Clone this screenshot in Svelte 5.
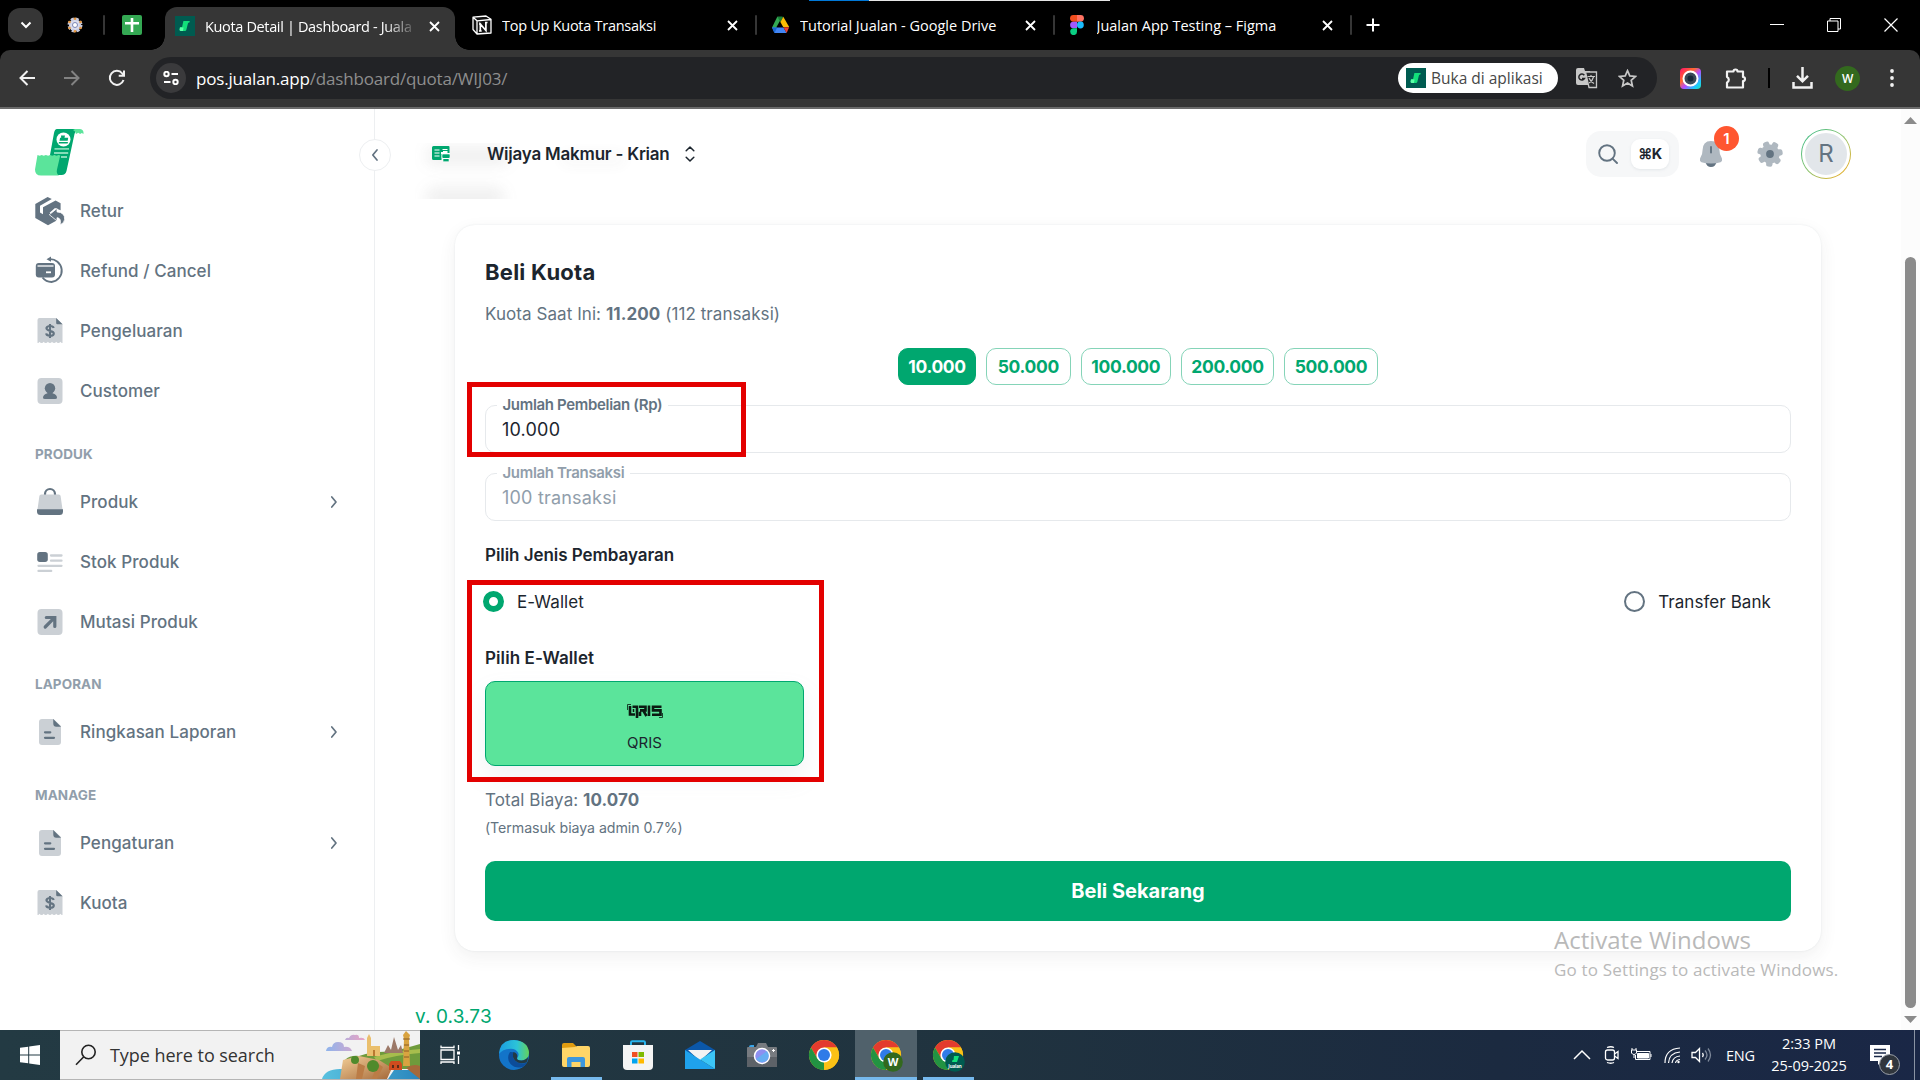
<script>
  let menu = [
    {
      items: [
        { label: "Retur", icon: "retur" },
        { label: "Refund / Cancel", icon: "refund" },
        { label: "Pengeluaran", icon: "bill" },
        { label: "Customer", icon: "user" }
      ]
    },
    {
      title: "Produk",
      items: [
        { label: "Produk", icon: "bag", children: true },
        { label: "Stok Produk", icon: "list" },
        { label: "Mutasi Produk", icon: "arrow" }
      ]
    },
    {
      title: "Laporan",
      items: [{ label: "Ringkasan Laporan", icon: "file", children: true }]
    },
    {
      title: "Manage",
      items: [
        { label: "Pengaturan", icon: "file", children: true },
        { label: "Kuota", icon: "bill" }
      ]
    }
  ];

  let tabs = [
    { title: "Top Up Kuota Transaksi", icon: "notion" },
    { title: "Tutorial Jualan - Google Drive", icon: "drive" },
    { title: "Jualan App Testing – Figma", icon: "figma" }
  ];

  let amounts = ["10.000", "50.000", "100.000", "200.000", "500.000"];
  let amount = "10.000";
  let payment = "ewallet";
</script>

<style>
  :global(body) {
    background: #fff;
    overflow: hidden;
  }
  .screen {
    position: relative;
    display: flex;
    flex-direction: column;
    width: 1920px;
    height: 1080px;
    overflow: hidden;
    font-family: Inter, "Liberation Sans", sans-serif;
    font-size: 17px;
    letter-spacing: 0.07px;
    color: #1c252e;
  }
  .screen * {
    box-sizing: border-box;
  }
  svg {
    display: block;
    flex: none;
  }
  button {
    font: inherit;
    letter-spacing: inherit;
    border: none;
    padding: 0;
    cursor: pointer;
  }

  /* browser */
  .browser {
    flex: none;
    height: 109px;
    background: #000;
    color: #fff;
    font-family: "Open Sans", "Noto Sans", sans-serif;
    letter-spacing: -0.35px;
  }
  .tabstrip {
    position: relative;
    display: flex;
    align-items: center;
    height: 50px;
  }
  .progress {
    position: absolute;
    top: 0;
    left: 809px;
    width: 301px;
    height: 1px;
    background: linear-gradient(90deg, #0078d7 60px, #e6e6e6 60px);
  }
  .tab-search {
    display: grid;
    place-items: center;
    width: 35px;
    height: 34px;
    margin-left: 8px;
    border-radius: 12px;
    background: #363636;
  }
  .pinned {
    margin-left: 24px;
  }
  .sep {
    flex: none;
    width: 2px;
    height: 20px;
    border-radius: 1px;
    background: #363636;
  }
  .pinned + .sep {
    margin: 0 17px 0 20px;
  }
  .active-tab {
    position: relative;
    display: flex;
    align-items: center;
    width: 290px;
    height: 43px;
    margin: 7px 0 0 23px;
    padding: 0 11px 5px 10px;
    border-radius: 12px 12px 0 0;
    background: #363636;
  }
  .active-tab::before,
  .active-tab::after {
    content: "";
    position: absolute;
    bottom: 0;
    width: 14px;
    height: 14px;
  }
  .active-tab::before {
    left: -14px;
    background: radial-gradient(circle at 0 0, transparent 13.5px, #363636 14px);
  }
  .active-tab::after {
    right: -14px;
    background: radial-gradient(circle at 100% 0, transparent 13.5px, #363636 14px);
  }
  .tab-title {
    flex: 1;
    overflow: hidden;
    white-space: nowrap;
    font-size: 14.5px;
  }
  .active-tab .tab-title {
    flex: none;
    width: 211px;
    margin: 0 13px 0 10px;
    -webkit-mask-image: linear-gradient(90deg, #000 180px, transparent 214px);
    mask-image: linear-gradient(90deg, #000 180px, transparent 214px);
  }
  .tab {
    display: flex;
    align-items: center;
    width: 297.5px;
    height: 50px;
    padding-left: 14px;
    letter-spacing: 0;
  }
  .active-tab + .tab {
    width: 302px;
    padding-left: 17px;
    letter-spacing: -0.27px;
  }
  .tab .tab-title {
    margin-left: 10px;
  }
  .tab:nth-last-child(3) .tab-title {
    margin-left: 12px;
  }
  .tab > .sep {
    margin-left: 17px;
  }
  .new-tab {
    margin-left: 14px;
  }
  .window-buttons {
    display: flex;
    align-items: center;
    gap: 43px;
    margin-left: auto;
    margin-right: 22px;
  }
  .toolbar {
    display: flex;
    align-items: center;
    height: 59px;
    padding: 0 13px 1px 18px;
    border-bottom: 2px solid #6b6b6b;
    border-radius: 10px 10px 0 0;
    background: #363636;
  }
  .nav {
    display: flex;
    gap: 27px;
    width: 132px;
  }
  .omnibox {
    display: flex;
    align-items: center;
    width: 1507px;
    height: 42px;
    padding: 0 20px 0 6px;
    border-radius: 21px;
    background: #222326;
  }
  .site-info {
    display: grid;
    place-items: center;
    width: 30px;
    height: 30px;
    border-radius: 50%;
    background: #3a3a3c;
  }
  .url {
    flex: 1;
    margin-left: 10px;
    padding-top: 1px;
    font-size: 17px;
    letter-spacing: -0.18px;
    color: #8e8e8e;
  }
  .url b {
    font-weight: 400;
    color: #fff;
  }
  .open-app {
    display: flex;
    align-items: center;
    gap: 5px;
    width: 160px;
    height: 30px;
    margin-right: 18px;
    padding-left: 8px;
    border-radius: 15px;
    background: #fff;
    color: #474747;
    font-size: 15.5px;
    font-weight: 500;
    letter-spacing: 0;
    white-space: nowrap;
  }
  .omnibox .star {
    margin-left: 20px;
  }
  .extensions {
    display: flex;
    flex: 1;
    align-items: center;
    padding-left: 23px;
  }
  .extensions .bar {
    width: 2px;
    height: 20px;
    margin: 0 22px 0 21px;
    background: #000;
  }
  .extensions .profile {
    display: grid;
    place-items: center;
    width: 25px;
    height: 25px;
    margin-left: 22px;
    border-radius: 50%;
    background: #33691e;
    font-size: 12px;
    font-weight: 600;
  }
  .extensions .puzzle {
    margin-left: 24px;
  }
  .extensions .dots {
    margin-left: 30px;
  }

  /* page */
  .page {
    display: flex;
    flex: 1;
    min-height: 0;
    background: #fff;
  }
  .sidebar {
    position: relative;
    width: 375px;
    padding: 20px 0 0 35px;
    border-right: 1px solid #edeff1;
    color: #637381;
  }
  .logo {
    margin-bottom: 5px;
  }
  .collapse {
    position: absolute;
    top: 30px;
    right: -17px;
    display: grid;
    place-items: center;
    width: 32px;
    height: 32px;
    border: 1px solid #edeff1;
    border-radius: 50%;
    background: #fff;
  }
  .subheader {
    height: 50.5px;
    padding-top: 22.5px;
    color: #919eab;
    font-size: 13.5px;
    font-weight: 700;
    line-height: 20px;
    text-transform: uppercase;
  }
  .item {
    display: flex;
    align-items: center;
    height: 60px;
    padding-right: 31px;
    font-weight: 450;
  }
  .item span {
    flex: 1;
    margin-left: 15px;
  }
  .main {
    display: flex;
    flex: 1;
    flex-direction: column;
  }
  .header {
    position: relative;
    display: flex;
    align-items: center;
    height: 90px;
    padding: 0 50px 0 57px;
  }
  .ghost {
    position: absolute;
    top: 34px;
    left: 40px;
    width: 300px;
    height: 56px;
    overflow: hidden;
  }
  .ghost i {
    position: absolute;
    border-radius: 12px;
    background: rgba(90, 90, 90, 0.085);
    filter: blur(7px);
  }
  .ghost i:nth-child(1) {
    top: 3px;
    left: 10px;
    width: 85px;
    height: 20px;
  }
  .ghost i:nth-child(2) {
    top: 43px;
    left: 10px;
    width: 80px;
    height: 24px;
  }
  .ghost i:nth-child(3) {
    top: 9px;
    left: 145px;
    width: 66px;
    height: 14px;
    opacity: 0.45;
  }
  .store {
    position: relative;
    margin: 0 15px 0 37px;
    font-weight: 600;
    letter-spacing: -0.22px;
  }
  .store-icon,
  .store + svg {
    position: relative;
  }
  .tools {
    display: flex;
    align-items: center;
    margin-left: auto;
  }
  .search {
    display: flex;
    align-items: center;
    justify-content: space-between;
    width: 93px;
    height: 46px;
    padding: 0 10px 0 12px;
    border-radius: 15px;
    background: #f6f7f8;
  }
  kbd {
    width: 38px;
    height: 30px;
    border-radius: 9px;
    background: #fff;
    box-shadow: 0 1px 3px rgba(145, 158, 171, 0.18);
    font: 700 14.5px/30px Inter, "DejaVu Sans", sans-serif;
    letter-spacing: -0.5px;
    text-align: center;
  }
  .bell {
    position: relative;
    margin: 0 35px 0 21px;
  }
  .bell b {
    position: absolute;
    top: -15px;
    right: -17px;
    width: 25px;
    height: 25px;
    border-radius: 50%;
    background: #ff5630;
    color: #fff;
    font-size: 15px;
    font-weight: 600;
    line-height: 25px;
    text-align: center;
  }
  .avatar {
    display: grid;
    place-items: center;
    width: 50px;
    height: 50px;
    margin-left: 18px;
    border-radius: 50%;
    background: linear-gradient(135deg, #2bb987, #8fc36e 50%, #ffab1a);
  }
  .avatar span {
    width: 48px;
    height: 48px;
    border: 3px solid #fff;
    border-radius: 50%;
    background: #e2e6ea;
    color: #637381;
    font-size: 24px;
    font-weight: 400;
    line-height: 42px;
    text-align: center;
  }
  .card {
    width: 1366px;
    height: 726px;
    margin: 26px 0 0 80px;
    padding: 30px;
    border-radius: 20px;
    background: #fff;
    box-shadow: 0 0 2px rgba(145, 158, 171, 0.2), 0 6px 18px rgba(60, 60, 60, 0.07);
  }
  h1 {
    margin: 0;
    font-size: 22px;
    font-weight: 700;
    line-height: 34px;
    letter-spacing: 0.25px;
  }
  p {
    margin: 0;
    color: #637381;
    line-height: 26px;
  }
  .balance {
    margin-top: 12px;
  }
  .chips {
    display: flex;
    justify-content: center;
    gap: 10px;
    margin-top: 21px;
  }
  .chip {
    height: 37px;
    padding: 0 9.5px 1px;
    border: 1px solid #85d4b8;
    border-radius: 10px;
    background: #fff;
    color: #00a76f;
    font-size: 17.5px;
    font-weight: 700;
    letter-spacing: -0.35px;
  }
  .chip:nth-child(2) {
    padding: 0 11px 1px;
  }
  .chip.selected {
    padding: 0 9px 1px;
    border-color: #00a76f;
    background: #00a76f;
    color: #fff;
  }
  .field {
    position: relative;
    height: 48px;
    margin-top: 20px;
    padding: 0 16px;
    border: 1px solid #e6e9ec;
    border-radius: 10px;
    font-size: 18px;
    line-height: 47px;
    letter-spacing: 0.2px;
  }
  .field label {
    position: absolute;
    top: -12px;
    left: 11px;
    padding: 0 6px 0 5.5px;
    background: #fff;
    color: #637381;
    font-size: 15px;
    font-weight: 600;
    line-height: 22px;
    letter-spacing: -0.33px;
  }
  .field.disabled,
  .field.disabled label {
    color: #919eab;
  }
  h2 {
    margin: 21px 0 0;
    font-size: 17px;
    font-weight: 600;
    line-height: 26px;
    letter-spacing: -0.05px;
  }
  .methods {
    display: flex;
    justify-content: space-between;
    height: 47px;
    margin-top: 10px;
    padding-right: 20px;
  }
  .radio {
    display: flex;
    align-items: center;
    gap: 13px;
    margin-left: -2px;
  }
  .radio i {
    width: 21px;
    height: 21px;
    border: 2px solid #637381;
    border-radius: 50%;
  }
  .radio.checked i {
    border: 6px solid #00a76f;
  }
  .methods + h2 {
    margin-top: 20px;
    letter-spacing: 0.1px;
  }
  .wallet {
    display: flex;
    flex-direction: column;
    align-items: center;
    width: 319px;
    height: 85px;
    margin-top: 10px;
    padding-top: 22px;
    border: 1px solid #00a76f;
    border-radius: 10px;
    background: #5be49b;
    box-shadow: 0 12px 24px rgba(145, 158, 171, 0.12);
    color: #1c252e;
    font-size: 15px;
  }
  .wallet span {
    margin-top: 14px;
    line-height: 20px;
  }
  .total {
    margin-top: 21px;
  }
  .fee {
    margin-top: 4px;
    font-size: 14.2px;
    line-height: 22px;
    letter-spacing: -0.06px;
  }
  .buy {
    width: 100%;
    height: 60px;
    margin-top: 22px;
    border-radius: 10px;
    background: #00a76f;
    color: #fff;
    font-size: 20px;
    font-weight: 700;
    letter-spacing: 0;
  }
  .version {
    margin: 54px 0 0 40px;
    color: #00a76f;
    font-size: 19px;
    line-height: 24px;
    letter-spacing: 0.1px;
  }
  .scrollbar {
    display: flex;
    flex-direction: column;
    align-items: center;
    justify-content: space-between;
    width: 19px;
    padding: 8px 0 7px;
    background: #fcfcfc;
  }
  .thumb {
    width: 11px;
    height: 751px;
    margin-top: 125px;
    border-radius: 6px;
    background: #8b8b8b;
  }

  /* highlight boxes and watermark drawn over the page */
  .mark {
    position: absolute;
    left: 467px;
    border: 5px solid #e30000;
  }
  .mark.amount {
    top: 382px;
    width: 279px;
    height: 75px;
  }
  .mark.payment {
    top: 580px;
    width: 357px;
    height: 202px;
  }
  .watermark {
    position: absolute;
    top: 923px;
    left: 1554px;
    color: #b9b9b9;
    font-family: "Open Sans", sans-serif;
    font-size: 17px;
    line-height: 26px;
    letter-spacing: 0.17px;
    white-space: nowrap;
  }
  .watermark div {
    font-size: 24px;
    line-height: 34px;
    letter-spacing: 0;
  }

  /* taskbar */
  .taskbar {
    display: flex;
    flex: none;
    align-items: center;
    height: 50px;
    background: linear-gradient(90deg, #233a43, #20333f 50%, #1b2a40 78%, #1a2746);
    color: #fff;
    font-family: "Open Sans", "Noto Sans", sans-serif;
    letter-spacing: -0.15px;
  }
  .start {
    display: grid;
    place-items: center;
    width: 60px;
  }
  .find {
    display: flex;
    align-items: center;
    width: 360px;
    height: 50px;
    padding-left: 15px;
    border: 1px solid #b5b5b5;
    border-width: 1px 0;
    background: #f2f2f2;
    color: #333;
    font-size: 18px;
  }
  .find span {
    flex: 1;
    margin-left: 13px;
    letter-spacing: -0.05px;
  }
  .taskview {
    width: 63px;
    padding-left: 20px;
  }
  .app {
    display: grid;
    place-items: center;
    width: 62px;
    height: 50px;
  }
  .app.open {
    background: linear-gradient(#76b9ed, #76b9ed) center bottom / 51px 3px no-repeat;
  }
  .app.current {
    border-bottom: 3px solid #76b9ed;
    padding-top: 3px;
    background: #50616b;
  }
  .tray {
    display: flex;
    align-items: center;
    height: 50px;
    margin-left: auto;
    font-size: 14.5px;
  }
  .tray > svg {
    margin-right: 12px;
  }
  .tray > svg:nth-child(3) {
    margin-left: -2px;
  }
  .tray > svg:nth-child(4) {
    margin-right: 10px;
  }
  .tray > svg:nth-child(5) {
    margin-right: 14px;
  }
  .clock {
    width: 84px;
    margin: 0 19px 0 12px;
    line-height: 22px;
    letter-spacing: 0;
    text-align: center;
  }
  .notice {
    position: relative;
    width: 45px;
    border-right: 1px solid #8a93a3;
    height: 50px;
    padding-top: 14px;
    margin-right: 5px;
  }
  .notice b {
    position: absolute;
    top: 24px;
    left: 9px;
    width: 21px;
    height: 21px;
    border: 1px solid #9aa0a8;
    border-radius: 50%;
    background: #30363d;
    font-size: 13px;
    line-height: 19px;
    text-align: center;
  }
</style>

{#snippet cross()}
  <svg width="11" height="11" viewBox="0 0 11 11" stroke="#fff" stroke-width="1.8"><path d="M1 1l9 9M10 1l-9 9" /></svg>
{/snippet}

{#snippet appIcon(size)}
  <svg width={size} height={size} viewBox="0 0 20 20">
    <path fill="#005b50" d="M0 0h20v20H0z" />
    <path fill="#12e07a" d="M8.4 5h6.4l-.6 1.8h-1.1L11.3 14q-.3 1-1.4 1H6q-1.6 0-1.3-1.7l.5-2.3h1.9z" />
    <path fill="#5dffa8" d="M4.9 11.4h3.6L8 15H6q-1.5 0-1.4-1.5z" />
  </svg>
{/snippet}

{#snippet tabIcon(name)}
  {#if name === "notion"}
    <svg width="20" height="20" viewBox="0 0 20 20">
      <path fill="#111" stroke="#fff" stroke-width="1.3" stroke-linejoin="round" d="M1 2.2L14 1l5 3.3V18l-14 1-4-4.5zM1 2.2l4 3.6V19M5 5.8l14-1.3" />
      <path fill="none" stroke="#fff" stroke-width="1.7" d="M8.3 16V9l5.6 6.5v-8M7 9h2.2M13 7.5h2.5M7 16h2.7" />
    </svg>
  {:else if name === "drive"}
    <svg width="19" height="18" viewBox="0 0 19 18">
      <path fill="#34a853" d="M6.3.8h5L3.8 14 1 11.6z" />
      <path fill="#188038" d="M6.3.8h6L9.4 6z" />
      <path fill="#fbbc04" d="M12.3.8L18.2 11h-6L9.4 6z" />
      <path fill="#4285f4" d="M1 11.5h11.5L15.6 17H3.5z" />
      <path fill="#1967d2" d="M1 11.5h5.2L3.5 17z" />
      <path fill="#ea4335" d="M12.4 11.3h5.8L15.6 17z" />
    </svg>
  {:else}
    <svg width="16" height="20" viewBox="0 0 16 20">
      <path fill="#f24e1e" d="M8 0v6.7H4.4a3.35 3.35 0 010-6.7z" />
      <path fill="#ff7262" d="M8 0h3.6a3.35 3.35 0 010 6.7H8z" />
      <path fill="#a259ff" d="M8 6.7v6.6H4.4a3.3 3.3 0 010-6.6z" />
      <circle fill="#1abcfe" cx="11.4" cy="10" r="3.4" />
      <path fill="#0acf83" d="M4.4 13.3H8v3.4a3.4 3.4 0 11-3.6-3.4z" />
    </svg>
  {/if}
{/snippet}

{#snippet menuIcon(name)}
  <svg width="30" height="30" viewBox="0 0 30 30" fill="#637381">
    {#if name === "retur"}
      <path d="M.3 8L12.6 1l4.2 2L5 9.7v6.8l3 1.7v-7L20.6 4.5l5 2.7v7L20 12l-5.4 4.8 7.1 5.6v2.1L13 29.3.3 22z" />
      <path d="M22 12.5v3.4q8.200.5 7.600 7.700-.4 3.600-4.600 5.300 1.700-6.900-3-7.200v3.200l-7.700-6.200z" stroke="#fff" stroke-width=".8" />
    {:else if name === "refund"}
      <path fill="none" stroke="#637381" stroke-width="1.9" d="M14 3.2a11.4 11.4 0 112.5 22.8q-5.5 0-9-4.5" />
      <path d="M11.5 3.2L16 .5v5.3z" />
      <rect x=".8" y="7" width="19.2" height="14.5" rx="3" />
      <path stroke="#fff" stroke-width="1.3" d="M2.5 10h16" />
      <path stroke="#fff" stroke-width="1.8" d="M11 16.3h5" />
    {:else if name === "bill"}
      <path fill="#cbd0d5" d="M4.5 2H21l6.500 6v19q-1.500 0-2.100-1.200-.8 1.200-2.100 1.200t-2.100-1.200q-.8 1.200-2.100 1.200T17 25.800q-.8 1.200-2 1.200t-2.100-1.200q-.8 1.200-2.100 1.200t-2.100-1.200Q8 27 6.600 27t-2-1.200Q4 27 2.500 27V4q0-2 2-2z" />
      <path d="M21.2 2l6.300 6.300h-5q-1.300 0-1.300-1.300z" />
      <path fill="none" stroke="#637381" stroke-width="2.1" d="M18.7 12q-.6-2-3.600-2t-3.700 2.100c0 3.800 7.400 1.900 7.400 5.300q0 2.300-3.700 2.300t-3.900-2.300M15 8v14" />
    {:else if name === "user"}
      <rect fill="#cbd0d5" x="2.5" y="2" width="25" height="26" rx="4" />
      <circle cx="15" cy="12.3" r="5.2" />
      <path d="M12.5 15h5v2.300q4.500 1.200 4.500 4.400 0 1.300-2 1.300H10q-2 0-2-1.300 0-3.200 4.500-4.400z" />
    {:else if name === "bag"}
      <path fill="none" stroke="#637381" stroke-width="2.2" d="M10 8.5V7a5 5 0 0110 0v1.5" />
      <path fill="#cbd0d5" d="M6.2 7.5h17.6q1.600 0 1.800 1.500l2 14H2.400l2-14q.2-1.500 1.800-1.500z" />
      <path d="M2 22.3h26v2.200q0 3.500-3.500 3.500h-19Q2 28 2 24.500z" />
    {:else if name === "list"}
      <rect x="2.2" y="5" width="10.6" height="10" rx="2.7" />
      <path fill="none" stroke="#cbd0d5" stroke-width="2.3" stroke-linecap="round" d="M16 8.5h10.500M16 13.700h10.500M3.500 18.800h23M3.500 23.900h12.700" />
    {:else if name === "arrow"}
      <rect fill="#cbd0d5" x="2.5" y="2" width="25" height="26" rx="4" />
      <path fill="none" stroke="#637381" stroke-width="3.2" stroke-linecap="round" d="M11.3 10.5h8.500v9M19.500 10.700L10.200 20" />
    {:else}
      <path fill="#cbd0d5" d="M7 2h11.500L26 9v16q0 3-3 3H7q-3 0-3-3V5q0-3 3-3z" />
      <path d="M18.2 2l7.800 7.800h-4.700q-3 0-3-3z" />
      <path fill="none" stroke="#637381" stroke-width="2.2" stroke-linecap="round" d="M10 15.3h5.300M10 20.800h9" />
    {/if}
  </svg>
{/snippet}

{#snippet chrome(badge)}
  <svg width="34" height="34" viewBox="0 0 34 34">
    <circle cx="17" cy="17" r="15" fill="#fbc116" />
    <path fill="#e33b2e" d="M4 9.5A15 15 0 0130 9.5H17l-6.500 11z" />
    <path fill="#229342" d="M4 9.5l6.500 11.300L17 24.500 17 32A15 15 0 014 9.500z" />
    <path fill="#fbc116" d="M17 9.5h13A15 15 0 0117 32l6.500-11.200z" />
    <circle cx="17" cy="17" r="7.6" fill="#fff" />
    <circle cx="17" cy="17" r="6" fill="#2f7be8" />
    {#if badge === "w"}
      <circle cx="24" cy="24" r="9.8" fill="#33691e" />
      <text x="24" y="28" fill="#fff" font-size="11" font-weight="700" text-anchor="middle">W</text>
    {:else if badge === "app"}
      <circle cx="24" cy="24" r="9.8" fill="#005b50" />
      <path fill="#12e07a" d="M23 18h5l-2 6h-5l.5-2h1z" />
      <text x="24" y="29.5" fill="#fff" font-size="4.5" font-weight="700" text-anchor="middle">Jualan</text>
    {/if}
  </svg>
{/snippet}

<div class="screen">
  <div class="browser">
    <div class="tabstrip">
      <div class="progress"></div>
      <div class="tab-search">
        <svg width="12" height="8" viewBox="0 0 12 8" fill="none" stroke="#fff" stroke-width="2"><path d="M1.5 1.5L6 6l4.5-4.5" /></svg>
      </div>
      <svg class="pinned" width="16" height="16" viewBox="0 0 16 16">
        <circle cx="8" cy="8" r="6" fill="#d9dcec" stroke="#c7cbe0" stroke-width="3" stroke-dasharray="3 1.7" />
        <g fill="#e5973f"><circle cx="8" cy="1.8" r="1.3" /><circle cx="8" cy="14.2" r="1.3" /><circle cx="2.5" cy="5" r="1.3" /><circle cx="13.5" cy="5" r="1.3" /><circle cx="2.5" cy="11" r="1.3" /><circle cx="13.5" cy="11" r="1.3" /></g>
        <circle cx="8" cy="8" r="2.5" fill="#fff" stroke="#7c86b5" />
      </svg>
      <div class="sep"></div>
      <svg width="20" height="20" viewBox="0 0 20 20"><rect width="20" height="20" rx="2" fill="#34a853" /><path stroke="#fff" stroke-width="2.6" d="M10 3v14M3 8.3h14" /></svg>
      <div class="active-tab">
        {@render appIcon(20)}
        <span class="tab-title">Kuota Detail | Dashboard - Juala</span>
        {@render cross()}
      </div>
      {#each tabs as tab}
        <div class="tab">
          {@render tabIcon(tab.icon)}
          <span class="tab-title">{tab.title}</span>
          {@render cross()}
          <div class="sep"></div>
        </div>
      {/each}
      <svg class="new-tab" width="14" height="14" viewBox="0 0 14 14" stroke="#fff" stroke-width="2"><path d="M7 .5v13M.5 7h13" /></svg>
      <div class="window-buttons">
        <svg width="14" height="14" viewBox="0 0 14 14" stroke="#fff"><path d="M0 6.5h14" /></svg>
        <svg width="14" height="14" viewBox="0 0 14 14" fill="none" stroke="#fff"><path d="M.5 3h10.500v10.500H.5zM3 3V.5h10.500v10.500H11" /></svg>
        <svg width="14" height="14" viewBox="0 0 14 14" stroke="#fff" stroke-width="1.2"><path d="M.5.5l13 13M13.500.5l-13 13" /></svg>
      </div>
    </div>
    <div class="toolbar">
      <div class="nav">
        <svg width="18" height="18" viewBox="0 0 18 18" fill="none" stroke="#f1f1f1" stroke-width="2"><path d="M17 9H3M9.500 2L2.500 9l7 7" /></svg>
        <svg width="18" height="18" viewBox="0 0 18 18" fill="none" stroke="#828282" stroke-width="2"><path d="M1 9h14M8.500 2l7 7-7 7" /></svg>
        <svg width="18" height="18" viewBox="0 0 18 18" fill="none" stroke="#f1f1f1" stroke-width="2"><path d="M15.500 11a7 7 0 11-1.200-6.500L16 6.300M16 1.500v5.300h-5.300" /></svg>
      </div>
      <div class="omnibox">
        <div class="site-info">
          <svg width="16" height="14" viewBox="0 0 16 14" fill="none" stroke="#fff" stroke-width="2"><circle cx="3.5" cy="3" r="2.2" /><path d="M8.500 3H15M1 11h6.500" /><circle cx="12.5" cy="11" r="2.2" /></svg>
        </div>
        <div class="url"><b>pos.jualan.app</b>/dashboard/quota/WIJ03/</div>
        <div class="open-app">{@render appIcon(20)} Buka di aplikasi</div>
        <svg width="22" height="22" viewBox="0 0 22 22">
          <path fill="#c7c7c7" d="M2 1h6l1 3h5l3 14H2q-2 0-2-2V3q0-2 2-2z" />
          <path fill="#2a2b2d" stroke="#c7c7c7" stroke-width="1.3" d="M9.500 5h11v15.500H13z" />
          <path fill="none" stroke="#222326" stroke-width="1.5" d="M8.300 8.300A3 3 0 108.500 11.500H6" />
          <path fill="none" stroke="#c7c7c7" stroke-width="1.2" d="M11.500 9.500h7.500M15 8v1.500M17.500 10q-1 4-4.500 6M13 11q1.500 3.500 5 5.500" />
        </svg>
        <svg class="star" width="19" height="19" viewBox="0 0 20 20" fill="none" stroke="#c7c7c7" stroke-width="1.8"><path d="M10 1.800l2.400 5.500 6 .6-4.500 4 1.300 5.900L10 14.700l-5.200 3.100 1.300-5.900-4.500-4 6-.6z" /></svg>
      </div>
      <div class="extensions">
        <svg width="21" height="21" viewBox="0 0 21 21">
          <defs><linearGradient id="cam" x1="0" y1="0" x2="1" y2="1"><stop offset="0" stop-color="#ff0f6f" /><stop offset=".35" stop-color="#ff6a2b" /><stop offset=".55" stop-color="#b84bff" /><stop offset=".8" stop-color="#1cc8ff" /><stop offset="1" stop-color="#23e5b5" /></linearGradient></defs>
          <rect width="21" height="21" rx="4" fill="url(#cam)" />
          <circle cx="10.5" cy="10.5" r="7" fill="#3b4a57" stroke="#fff" stroke-width="2" />
          <circle cx="10.5" cy="10.5" r="3" fill="#172838" />
        </svg>
        <svg class="puzzle" width="22" height="22" viewBox="0 0 22 22" fill="none" stroke="#f1f1f1" stroke-width="2.2"><path stroke-linejoin="round" d="M2 4.500h6.500a2 2 0 114 0H18v5.500a2 2 0 110 4v6.500H2v-5a3 3 0 000-5.500z" /></svg>
        <div class="bar"></div>
        <svg width="21" height="22" viewBox="0 0 21 22" fill="none" stroke="#f1f1f1" stroke-width="2.5"><path d="M10.500 0v14M5 8.800l5.500 5.500L16 8.800M1.500 15v5.500h18V15" /></svg>
        <div class="profile">W</div>
        <svg class="dots" width="4" height="20" viewBox="0 0 4 20" fill="#f1f1f1"><circle cx="2" cy="3" r="1.9" /><circle cx="2" cy="10" r="1.9" /><circle cx="2" cy="17" r="1.9" /></svg>
      </div>
    </div>
  </div>

  <div class="page">
    <nav class="sidebar">
      <svg class="logo" width="50" height="47" viewBox="0 0 50 47">
        <path fill="#00a76f" d="M22 0h22q-3.500 1-4.500 5l-8 37q-1 4-5 4H13l2-20 4-22q.8-4 3-4z" />
        <path fill="#5be49b" d="M40 0h5q4 .5 3.500 5l-1.700-1-1.700 1-1.800-1.300L41 5q-.5-3-3-4z" />
        <path fill="#5be49b" d="M2.500 26l2.200.8 2-.8 2 .8 2.200-.8 2.200.8 2-.8 2.200.8 2-.8 2.200.8 2.200-.8 1.500.5-3.200 14q-1 4 2 6H6q-6 0-6-6z" />
        <circle cx="28.5" cy="10.5" r="7" fill="#fff" />
        <path fill="#00a76f" d="M26 6.500h4l-.5 2.200h3.700l-.5 3H24.500l.6-3h1.100zM24 13h9l-.4 1.500h-9z" />
        <path stroke="#85dcb8" stroke-width="1.8" d="M19.500 19.800H34M19 24h14.200M26 28h6" />
      </svg>
      {#each menu as group}
        {#if group.title}
          <div class="subheader">{group.title}</div>
        {/if}
        {#each group.items as item}
          <div class="item">
            {@render menuIcon(item.icon)}
            <span>{item.label}</span>
            {#if item.children}
              <svg width="18" height="18" viewBox="0 0 18 18" fill="none" stroke="#637381" stroke-width="1.7" stroke-linecap="round" stroke-linejoin="round"><path d="M6.800 4l4.200 5-4.200 5" /></svg>
            {/if}
          </div>
        {/each}
      {/each}
      <div class="collapse">
        <svg width="18" height="18" viewBox="0 0 18 18" fill="none" stroke="#637381" stroke-width="1.7" stroke-linecap="round" stroke-linejoin="round"><path d="M11 4L6.800 9l4.200 5" /></svg>
      </div>
    </nav>

    <div class="main">
      <header class="header">
        <div class="ghost"><i></i><i></i><i></i></div>
        <svg class="store-icon" width="18" height="16" viewBox="0 0 18 16">
          <path fill="#00a76f" d="M1.500 0h15q1 0 1 1v6H9.500v7h-8Q0 14 0 12.500v-11Q0 0 1.500 0z" />
          <path stroke="#fff" stroke-width="1.2" d="M2.500 4h5M2.500 7h5M2.500 10h5M10.500 3.500h5" />
          <path fill="#fff" d="M9 6h2V5h4.500v2H18v1H9z" />
          <path fill="#00a76f" stroke="#fff" stroke-width=".6" d="M11 8h6q1 0 1 1v3h-1v3.700h-6V12h-1V9q0-1 1-1z" />
          <path stroke="#fff" d="M11 12.500h6" />
        </svg>
        <span class="store">Wijaya Makmur - Krian</span>
        <svg width="10" height="16" viewBox="0 0 10 16" fill="none" stroke="#1c252e" stroke-width="1.5" stroke-linecap="round" stroke-linejoin="round"><path d="M1.200 4.800L5 1l3.800 3.800M1.200 11.200L5 15l3.800-3.800" /></svg>
        <div class="tools">
          <div class="search">
            <svg width="20" height="20" viewBox="0 0 20 20" fill="none" stroke="#637381" stroke-width="1.9" stroke-linecap="round"><circle cx="9" cy="9" r="7.8" /><path d="M14.800 14.800L19 19" /></svg>
            <kbd>⌘K</kbd>
          </div>
          <div class="bell">
            <svg width="22" height="26" viewBox="0 0 22 26">
              <path fill="#637381" d="M5.500 21h11q-1 5-5.500 5t-5.500-5z" />
              <path fill="#afb8c0" d="M11 0q8.500 0 8.500 9.500 0 4 1.800 6.500 2 4-.8 5.200-4 1.300-9.500 1.300T1.500 21.200Q-1.300 20 .7 16q1.800-2.500 1.800-6.500Q2.500 0 11 0z" />
              <path stroke="#637381" stroke-width="1.9" stroke-linecap="round" d="M11 6v5.500" />
            </svg>
            <b>1</b>
          </div>
          <svg width="26" height="26" viewBox="0 0 26 26">
            <g fill="#afb8c0">
              <circle cx="13" cy="13" r="9.6" />
              {#each [30, 81, 133, 184, 236, 287, 338] as angle}
                <rect x="9.8" y=".3" width="6.4" height="8" rx="2.2" transform="rotate({angle} 13 13)" />
              {/each}
            </g>
            <circle cx="13" cy="13" r="3.9" fill="#637381" />
          </svg>
          <div class="avatar"><span>R</span></div>
        </div>
      </header>

      <section class="card">
        <h1>Beli Kuota</h1>
        <p class="balance">Kuota Saat Ini: <b>11.200</b> (112 transaksi)</p>
        <div class="chips">
          {#each amounts as value}
            <button class="chip" class:selected={amount === value} on:click={() => (amount = value)}>{value}</button>
          {/each}
        </div>
        <div class="field">
          <label for="amount">Jumlah Pembelian (Rp)</label>
          <div id="amount">{amount}</div>
        </div>
        <div class="field disabled">
          <label for="count">Jumlah Transaksi</label>
          <div id="count">{parseInt(amount) * 10} transaksi</div>
        </div>
        <h2>Pilih Jenis Pembayaran</h2>
        <div class="methods">
          <div class="radio" class:checked={payment === "ewallet"}><i></i>E-Wallet</div>
          <div class="radio" class:checked={payment === "bank"}><i></i>Transfer Bank</div>
        </div>
        <h2>Pilih E-Wallet</h2>
        <button class="wallet">
          <svg width="36" height="15" viewBox="0 0 36 15" fill="none" stroke="#0b1a12">
            <path stroke-width=".8" d="M.5 6V.5H4M35.500 9v4.500H32" />
            <path stroke-width="2.6" d="M3 2v8.500h5M5.500 2.700H10V14M13 12V7.800M12 2.700h6.500v3.700H13M16.500 7l3 5M22 1.500V12M34.500 2.700H26v3.700h7.500v4.400H25" />
            <path stroke-width="1.5" d="M6.500 5v3" />
          </svg>
          <span>QRIS</span>
        </button>
        <p class="total">Total Biaya: <b>10.070</b></p>
        <p class="fee">(Termasuk biaya admin 0.7%)</p>
        <button class="buy">Beli Sekarang</button>
      </section>
      <div class="version">v. 0.3.73</div>
    </div>

    <div class="scrollbar">
      <svg width="13" height="7" viewBox="0 0 13 7" fill="#8b8b8b"><path d="M6.500 0L13 7H0z" /></svg>
      <div class="thumb"></div>
      <svg width="13" height="7" viewBox="0 0 13 7" fill="#8b8b8b"><path d="M6.500 7L13 0H0z" /></svg>
    </div>
  </div>

  <div class="taskbar">
    <div class="start">
      <svg width="20" height="20" viewBox="0 0 20 20" fill="#fff"><path d="M0 2.800l8.200-1.100v7.800H0zM9.200 1.500L20 0v9.500H9.200zM0 10.500h8.200v7.800L0 17.200zM9.200 10.500H20V20L9.200 18.500z" /></svg>
    </div>
    <div class="find">
      <svg width="22" height="22" viewBox="0 0 22 22" fill="none" stroke="#222" stroke-width="1.6"><circle cx="13.5" cy="8" r="6.7" /><path d="M8.800 12.800L1 20.800" /></svg>
      <span>Type here to search</span>
      <svg width="98" height="48" viewBox="0 0 98 48">
        <defs>
          <linearGradient id="cloud" x1="0" y1="0" x2="1" y2="0"><stop offset="0" stop-color="#8fb4ec" /><stop offset="1" stop-color="#e9a3c4" /></linearGradient>
          <linearGradient id="rock" x1="0" y1="0" x2="1" y2="1"><stop offset="0" stop-color="#f3cf98" /><stop offset="1" stop-color="#a5693a" /></linearGradient>
          <linearGradient id="sea" x1="0" y1="0" x2="1" y2="0"><stop offset="0" stop-color="#58c1df" /><stop offset="1" stop-color="#2b86bd" /></linearGradient>
        </defs>
        <path fill="url(#cloud)" d="M4 20q1-5 6-4 1-5 6-5 6 0 6 5 6-1 8 4zM23 9q1-3 4-2 2-4 6-3 4-1 4 3 5-1 6 2z" />
        <path fill="url(#sea)" d="M0 48q3-10 18-10h20v10zM66 48l6-9h26v9z" />
        <path fill="#6f9b3c" d="M23 29q5-5 14-4 16-5 30-4 14-3 31-8v25H30z" />
        <path fill="#a7bd4d" d="M52 26q15-5 46-8v4q-25 2-43 8z" />
        <path fill="url(#rock)" d="M21 29l16-4 20 4 13 8-5 11H18z" />
        <path fill="#bb7c46" d="M36 32l7 3-3 13h-6zM55 32l6 4-6 12h-5z" />
        <path fill="#eabf6d" d="M45 25V7l2-4 2 4v8h9v10z" />
        <path fill="#b97931" d="M51 19h2v6h-2z" />
        <path fill="#9c7968" d="M62 22l4-8 3 5 3-13 4 13 3-5 2 8z" />
        <path fill="#d9a340" d="M81 35l1-27-1-4 3-4 4 4-1 4 1 27z" />
        <path stroke="#8a5d24" d="M81 8h7M82 14h5M82 20h5M82 26h5" />
        <path fill="#cf4c1e" d="M67 33l2-3h9l2 3v6H67z" />
        <path fill="#5b2c18" d="M70 34h2v3h-2zM75 34h2v3h-2z" />
        <circle cx="51" cy="35" r="6" fill="#4f8a2c" /><circle cx="33" cy="29" r="4" fill="#4f8a2c" />
        <path fill="#a5693a" d="M84 37q7-5 14-2v13z" />
      </svg>
    </div>
    <div class="taskview">
      <svg width="21" height="20" viewBox="0 0 21 20" fill="none" stroke="#fff" stroke-width="1.3"><path d="M1 5h13v9.500H1zM1 .5v2h13v-2M1 19v-2h13v2M18.500 0v5M18.500 11v8" /><path stroke-width="3" d="M17 8h3" /></svg>
    </div>
    <div class="app">
      <svg width="30" height="30" viewBox="0 0 30 30">
        <defs>
          <linearGradient id="edge" x1="0" y1="0" x2="1" y2="0"><stop offset="0" stop-color="#1b9de2" /><stop offset=".6" stop-color="#2cc3d8" /><stop offset="1" stop-color="#65d35a" /></linearGradient>
        </defs>
        <circle cx="15" cy="15" r="15" fill="#1374c9" />
        <path fill="url(#edge)" d="M0 14Q1 0 15 0q14 1 15 12.500 0 7.500-7.500 8-5 0-4.500-2.500 2.500-2.500 1-5.500-2-3.800-7-3.800Q3.500 9 0 14z" />
        <path fill="#0c4c99" d="M11 12q-4 6 .5 12 5 5 12 3 3.500-2 4.500-4.500-6 2.500-11-1-5-4-2-9.200z" />
        <path fill="#233943" d="M14.500 12q4.500 1 3.700 5.500-1 3 4.300 3 4-.1 6.500-3.500Q29 21 27.500 22.500q-7 2-11-1.500-4-4-2-9z" />
      </svg>
    </div>
    <div class="app open">
      <svg width="28" height="24" viewBox="0 0 28 24"><path fill="#e09c10" d="M0 2q0-2 2-2h9l3 3v4H0z" /><path fill="#ffd567" d="M0 5l13-1 2-1h11q2 0 2 2v17q0 2-2 2H2q-2 0-2-2z" /><path fill="#3d97dd" d="M5 24v-8q0-2 2-2h14q2 0 2 2v8h-4.500v-5h-9v5z" /></svg>
    </div>
    <div class="app">
      <svg width="30" height="30" viewBox="0 0 30 30"><path fill="none" stroke="#28b4ed" stroke-width="2" d="M8 7V2.500q0-1.300 1.300-1.300h11.400q1.300 0 1.300 1.300V7" /><path fill="#f4f4f4" d="M0 5h30v21q0 4-4 4H4q-4 0-4-4z" /><path fill="#f25022" d="M9 12h5.500v5H9z" /><path fill="#7fba00" d="M15.500 12H21v5h-5.500z" /><path fill="#00a4ef" d="M9 18.500h5.500v5H9z" /><path fill="#ffb900" d="M15.500 18.500H21v5h-5.500z" /></svg>
    </div>
    <div class="app">
      <svg width="30" height="28" viewBox="0 0 30 28"><path fill="#0b57a8" d="M0 9L15 0l15 9v5H0z" /><path fill="#f3f3f3" d="M3 9h24L15 20z" /><path fill="#1fa2ec" d="M0 9l15 9.500L30 28H0z" /><path fill="#3cc6f7" d="M30 9v19L15 18.500z" /></svg>
    </div>
    <div class="app">
      <svg width="30" height="24" viewBox="0 0 30 24"><path fill="#3aa5e8" d="M2 4q0-2 2-2h3v3H2z" /><path fill="#777b80" d="M1 4h8l2-4h8l2 4h8q1 0 1 1v18q0 1-1 1H1q-1 0-1-1V5q0-1 1-1z" /><path fill="#5d6268" d="M0 14h30v9q0 1-1 1H1q-1 0-1-1z" /><circle cx="15" cy="13" r="7.5" fill="#8d8ff0" stroke="#fff" stroke-width="1.5" /><path fill="#55b9f2" opacity=".7" d="M9 16l11-8q4 6-1 10-6 3-10-2z" /><path stroke="#fff" d="M26.500 6v3M25 7.500h3" /></svg>
    </div>
    <div class="app">{@render chrome()}</div>
    <div class="app current">{@render chrome("w")}</div>
    <div class="app open">{@render chrome("app")}</div>

    <div class="tray">
      <svg width="18" height="12" viewBox="0 0 18 12" fill="none" stroke="#fff" stroke-width="1.5"><path d="M1 10l8-8 8 8" /></svg>
      <svg width="18" height="18" viewBox="0 0 18 18" fill="none" stroke="#fff" stroke-width="1.3"><rect x="2.5" y="4" width="9" height="10" rx="2" /><path d="M11.500 8L15 5.500v7L11.500 10M4 1.500q4-1.500 7 0M4 16.500q4 1.500 7 0" /></svg>
      <svg width="21" height="16" viewBox="0 0 21 16" fill="none" stroke="#fff"><path d="M6 4.500h13v8H4.500V8M20 7v3M1 1v2M5 1v2M.5 3h5v3q-1 1.500-2.500 1.500T.5 6zM3 7.500V11" /><path fill="#fff" d="M6.500 6.500h11v4.500h-11z" /></svg>
      <svg width="17" height="17" viewBox="0 0 17 17" fill="none" stroke="#fff" stroke-width="1.2"><path d="M1 16Q1 2 16 1M4.500 16Q5 6 16 5M8 16q1-6.500 8-7M11.500 16q.5-3 4.500-3.500" /><circle cx="14.5" cy="15" r="1.2" fill="#fff" stroke="none" /></svg>
      <svg width="21" height="16" viewBox="0 0 21 16" fill="none" stroke="#fff" stroke-width="1.3"><path d="M1 5.500h3.500l4-4v13l-4-4H1z" /><path d="M11.500 6q1.500 2 0 4" /><path stroke="#7d8899" d="M14 3.500q4 4.500 0 9M17 1.500q5 6.500 0 13" /></svg>
      <span>ENG</span>
      <div class="clock">2:33 PM<br />25-09-2025</div>
      <div class="notice">
        <svg width="20" height="21" viewBox="0 0 20 21"><path fill="#fff" d="M0 1h20v16h-8l-4 4v-4H0z" /><path stroke="#1a2848" stroke-width="1.4" d="M4 5.500h12M4 9h12M4 12.500h8" /></svg>
        <b>4</b>
      </div>
    </div>
  </div>

  <div class="mark amount"></div>
  <div class="mark payment"></div>
  <div class="watermark">
    <div>Activate Windows</div>
    Go to Settings to activate Windows.
  </div>
</div>
